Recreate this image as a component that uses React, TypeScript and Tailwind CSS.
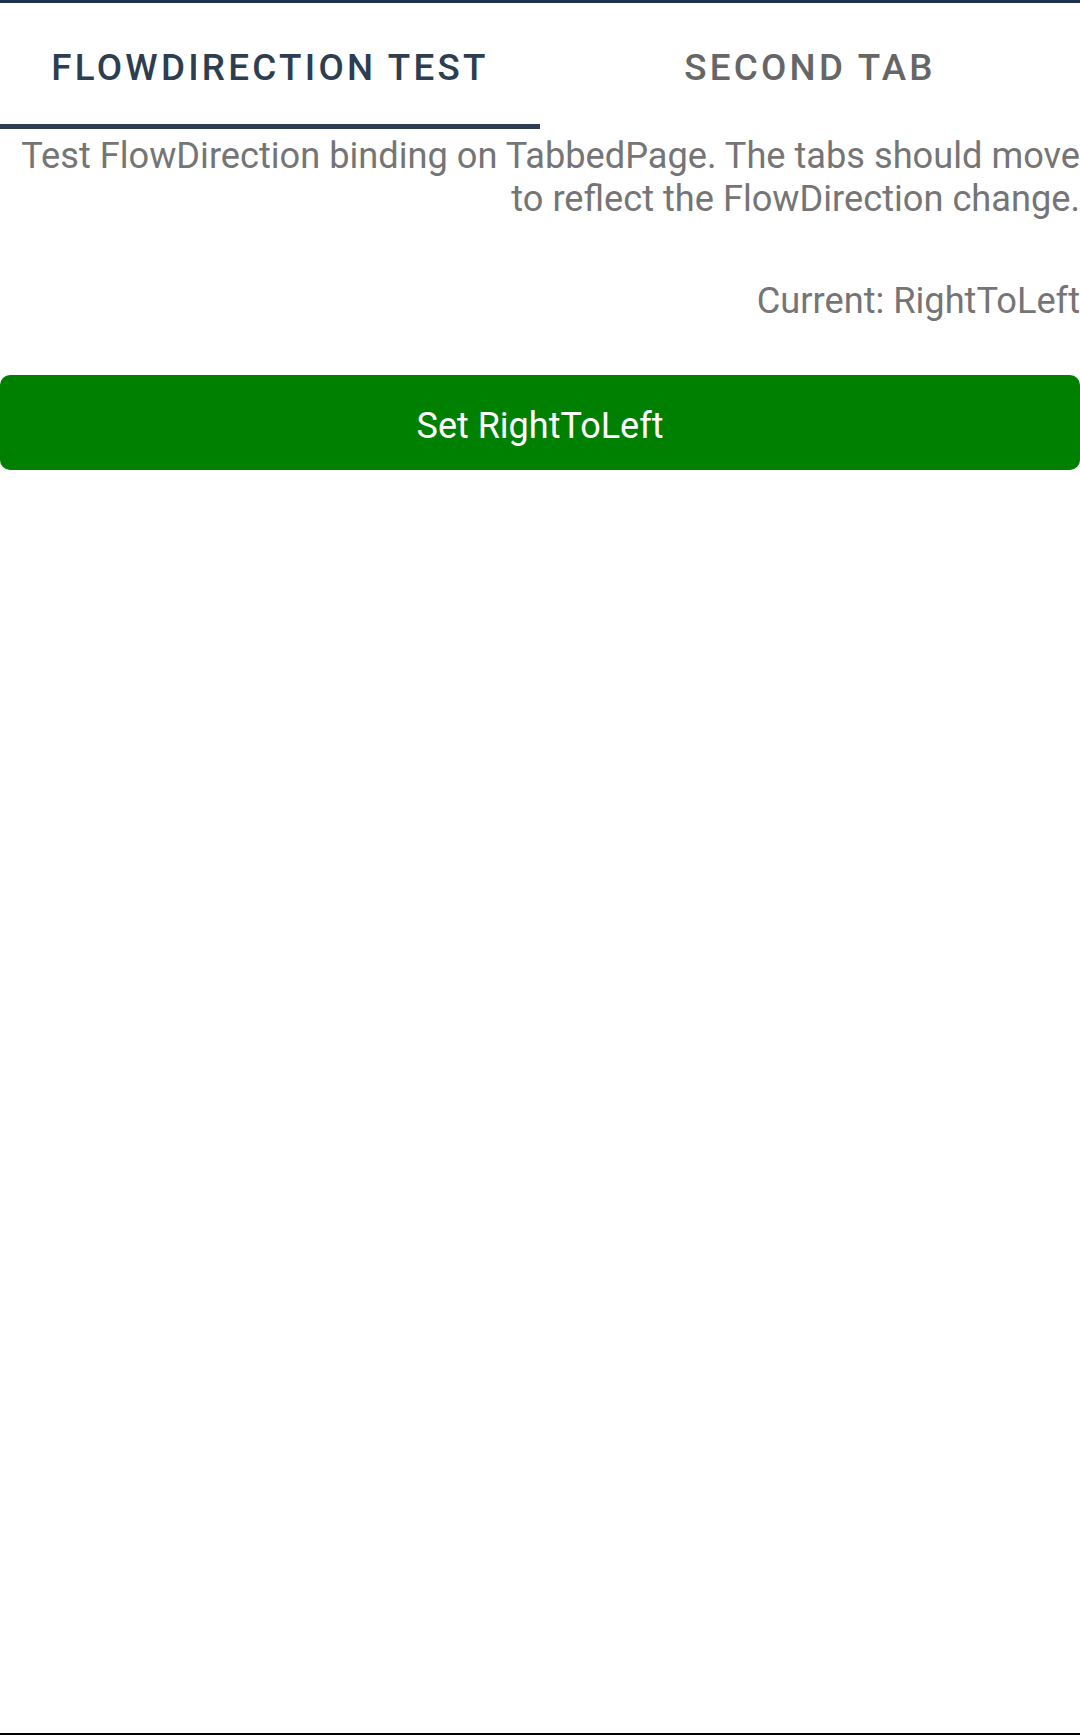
export default function App() {
	return (
		<div className="w-[1080px] h-[1735px] flex flex-col bg-white font-['Roboto',sans-serif]">
			<div className="h-[3px] bg-[#1f344a]" />

			{/* tabs */}
			<div className="h-[126px] flex flex-row">
				<div className="flex-1 flex items-center justify-center border-b-[5px] border-[#2c3e50] pt-[9px]">
					<span className="text-[36.75px] font-medium tracking-[0.089em] text-[#2c3e50]">
						FLOWDIRECTION TEST
					</span>
				</div>
				<div className="flex-1 flex items-center justify-center border-b-[5px] border-transparent pt-[9px]">
					<span className="text-[36.75px] font-medium tracking-[0.089em] text-[#666666]">
						SECOND TAB
					</span>
				</div>
			</div>

			<div className="flex-1 flex flex-col">
				<p className="pt-[4.5px] text-right text-[36.2px] leading-[43px] text-[#757575]">
					Test FlowDirection binding on TabbedPage. The tabs should move to reflect the FlowDirection change.
				</p>
				<p className="mt-[59px] text-right text-[36.2px] leading-[43px] text-[#757575]">
					Current: RightToLeft
				</p>
				<button className="mt-[53.5px] h-[95px] w-full rounded-[10px] bg-[#008000] pt-[6px] text-white text-[36px]">
					Set RightToLeft
				</button>
			</div>

			<div className="h-[2px] bg-black" />
		</div>
	);
}
